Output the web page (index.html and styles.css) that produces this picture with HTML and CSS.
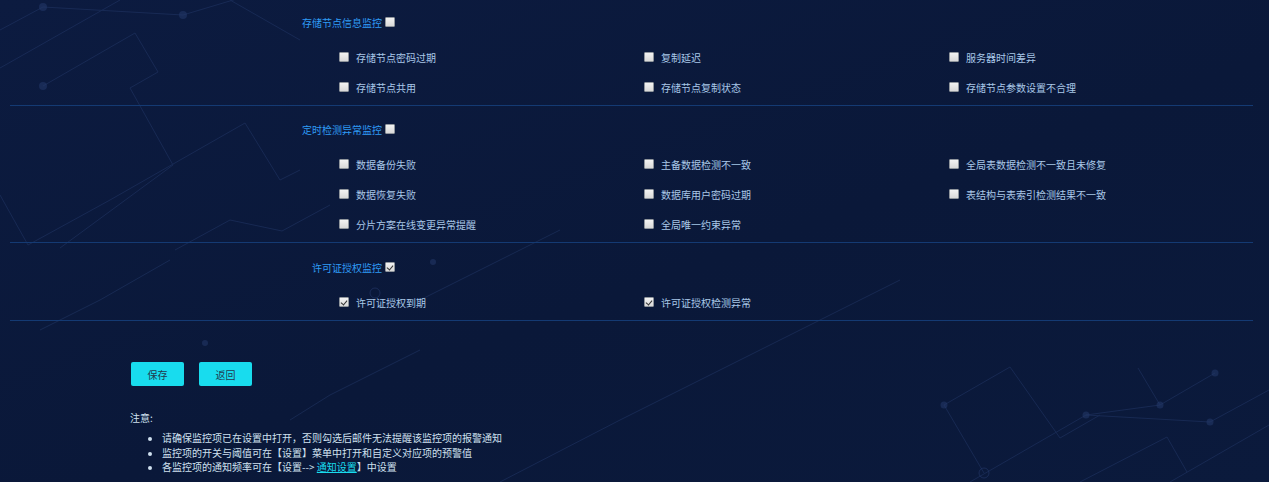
FILE: index.html
```html
<!DOCTYPE html>
<html lang="zh-CN">
<head>
<meta charset="utf-8">
<title>告警设置</title>
<link rel="stylesheet" href="styles.css">
</head>
<body>
<svg class="bg-deco" width="1269" height="482" viewBox="0 0 1269 482" aria-hidden="true">
  <g fill="none" stroke="#24396a" stroke-width="1" opacity="0.5">
    <polyline points="0,30 43,7 183,15 300,-20"/>
    <polyline points="0,68 120,0"/>
    <polyline points="43,86 135,33 158,72 130,88 173,165 60,248"/>
    <polyline points="0,195 28,245 110,200 245,123 280,180 300,170"/>
    <polyline points="175,250 230,220 282,231 330,205"/>
    <polyline points="230,0 300,40"/>
    <polyline points="40,330 100,300 170,260"/>
    <polyline points="420,300 500,260 560,230"/>
    <polyline points="290,420 330,395 420,350"/>
    <polyline points="944,405 1010,367 1060,438 1100,415"/>
    <polyline points="944,405 984,473"/>
    <polyline points="970,482 1086,415 1160,405 1215,373"/>
    <polyline points="1086,415 1210,422 1269,390"/>
    <polyline points="1138,368 1160,405"/>
    <polyline points="1080,482 1167,437 1187,472"/>
    <polyline points="1170,482 1269,425"/>
    <polyline points="500,482 620,420 760,350 900,280"/>
  </g>
  <g fill="#24396a" opacity="0.55">
    <circle cx="43" cy="7" r="4"/>
    <circle cx="183" cy="15" r="4"/>
    <circle cx="43" cy="86" r="4"/>
    <circle cx="944" cy="405" r="3.5"/>
    <circle cx="1086" cy="415" r="3.5"/>
    <circle cx="1160" cy="405" r="3.5"/>
    <circle cx="1210" cy="422" r="3.5"/>
    <circle cx="1215" cy="373" r="3.5"/>
    <circle cx="433" cy="262" r="3"/>
    <circle cx="205" cy="343" r="3"/>
  </g>
  <g fill="none" stroke="#24396a" opacity="0.6">
    <circle cx="984" cy="473" r="5"/>
    <circle cx="375" cy="293" r="5"/>
  </g>
</svg>

<main class="page">
  <section class="section first">
    <div class="title-row">
      <span class="title">存储节点信息监控</span>
      <span class="cb"></span>
    </div>
    <div class="items">
      <label class="item"><span class="cb"></span>存储节点密码过期</label>
      <label class="item"><span class="cb"></span>复制延迟</label>
      <label class="item"><span class="cb"></span>服务器时间差异</label>
      <label class="item"><span class="cb"></span>存储节点共用</label>
      <label class="item"><span class="cb"></span>存储节点复制状态</label>
      <label class="item"><span class="cb"></span>存储节点参数设置不合理</label>
    </div>
  </section>

  <section class="section">
    <div class="title-row">
      <span class="title">定时检测异常监控</span>
      <span class="cb"></span>
    </div>
    <div class="items">
      <label class="item"><span class="cb"></span>数据备份失败</label>
      <label class="item"><span class="cb"></span>主备数据检测不一致</label>
      <label class="item"><span class="cb"></span>全局表数据检测不一致且未修复</label>
      <label class="item"><span class="cb"></span>数据恢复失败</label>
      <label class="item"><span class="cb"></span>数据库用户密码过期</label>
      <label class="item"><span class="cb"></span>表结构与表索引检测结果不一致</label>
      <label class="item"><span class="cb"></span>分片方案在线变更异常提醒</label>
      <label class="item"><span class="cb"></span>全局唯一约束异常</label>
    </div>
  </section>

  <section class="section third">
    <div class="title-row">
      <span class="title">许可证授权监控</span>
      <span class="cb checked"></span>
    </div>
    <div class="items">
      <label class="item"><span class="cb checked"></span>许可证授权到期</label>
      <label class="item"><span class="cb checked"></span>许可证授权检测异常</label>
    </div>
  </section>

  <div class="actions">
    <button class="btn" type="button">保存</button>
    <button class="btn" type="button">返回</button>
  </div>

  <div class="notes">
    <p class="notes-title">注意:</p>
    <ul class="notes-list">
      <li>请确保监控项已在设置中打开，否则勾选后邮件无法提醒该监控项的报警通知</li>
      <li>监控项的开关与阈值可在【设置】菜单中打开和自定义对应项的预警值</li>
      <li>各监控项的通知频率可在【设置--&gt; <a class="link" href="#">通知设置</a>】中设置</li>
    </ul>
  </div>
</main>
</body>
</html>
```

FILE: styles.css
```css
* {
  box-sizing: border-box;
}

html, body {
  margin: 0;
  padding: 0;
}

body {
  width: 1269px;
  height: 482px;
  overflow: hidden;
  position: relative;
  background: linear-gradient(160deg, #0c1b40 0%, #0a1839 55%, #0b1a3c 100%);
  font-family: "Noto Sans CJK SC", "Microsoft YaHei", "Noto Sans", sans-serif;
  font-size: 10px;
  color: #a9c6e6;
}

.bg-deco {
  position: absolute;
  left: 0;
  top: 0;
  z-index: 0;
}

.page {
  position: relative;
  z-index: 1;
  padding: 0 16px 0 10px;
}

.section {
  padding-top: 13px;
  padding-bottom: 3px;
  border-bottom: 1px solid #143a73;
}

.section.first {
  padding-top: 12px;
}

.section.third {
  padding-top: 14px;
}

.title-row {
  display: flex;
  align-items: center;
  height: 20px;
  margin-bottom: 10px;
}

.title {
  width: 375px;
  text-align: right;
  color: #2f9cf5;
  padding-right: 3px;
}

.items {
  display: grid;
  grid-template-columns: repeat(3, 305px);
  margin-left: 329px;
}

.item {
  display: flex;
  align-items: center;
  gap: 7px;
  height: 30px;
  color: #a9c8e8;
  white-space: nowrap;
}

.cb {
  flex: none;
  width: 10px;
  height: 10px;
  border: 1px solid #8f959c;
  border-radius: 1px;
  background: linear-gradient(#f2f2f2, #d9d9d9);
  position: relative;
}

.cb.checked::after {
  content: "";
  position: absolute;
  left: 2px;
  top: 1px;
  width: 3px;
  height: 5px;
  border-right: 1.6px solid #333;
  border-bottom: 1.6px solid #333;
  transform: rotate(40deg);
}

.actions {
  display: flex;
  gap: 15px;
  margin-top: 41px;
  margin-left: 121px;
}

.btn {
  width: 53px;
  height: 24px;
  border: none;
  border-radius: 2px;
  background: #18dcee;
  color: #23394f;
  font-family: inherit;
  font-size: 10px;
  padding: 0;
  cursor: pointer;
}

.notes {
  margin-left: 120px;
  margin-top: 24px;
  color: #cfe0ef;
}

.notes-title {
  margin: 0;
  line-height: 15px;
}

.notes-list {
  margin: 6px 0 0;
  padding-left: 32px;
  list-style: none;
}

.notes-list li {
  position: relative;
  line-height: 14.5px;
}

.notes-list li::before {
  content: "";
  position: absolute;
  left: -14px;
  top: 6px;
  width: 4px;
  height: 4px;
  border-radius: 50%;
  background: #cfe0ef;
}

.link {
  color: #19dcef;
  text-decoration: underline;
}
```
